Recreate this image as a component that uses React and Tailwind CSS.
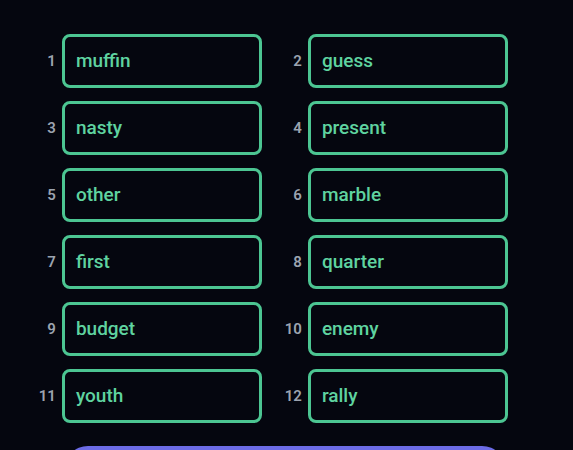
import React from "react";

const words = [
    "muffin", "guess", "nasty", "present", "other", "marble",
    "first", "quarter", "budget", "enemy", "youth", "rally",
];

export default function App() {
    return (
        <div
            className="w-[573px] h-[450px] overflow-hidden bg-[#05060f]"
            style={{ fontFamily: "Roboto, 'Liberation Sans', sans-serif" }}
        >
            <div className="pt-[34px] pl-[34px] grid grid-cols-[228px_228px] gap-x-[18px] gap-y-[13px]">
                {words.map((w, i) => (
                    <div key={w} className="flex items-center gap-[6px]">
                        <span className="w-[22px] text-right text-[15px] font-semibold text-[#9ca3af]">
                            {i + 1}
                        </span>
                        <div className="w-[201px] h-[54px] flex items-center px-[11px] rounded-[8px] border-[3px] border-[#4cc592] text-[19px] font-medium text-[#5fd3a0]">
                            {w}
                        </div>
                    </div>
                ))}
            </div>

            {/* Continue button, cut off by the viewport */}
            <div className="mt-[23px] ml-[64px] w-[442px] h-[48px] rounded-[24px] bg-[#6c6be6]" />
        </div>
    );
}
